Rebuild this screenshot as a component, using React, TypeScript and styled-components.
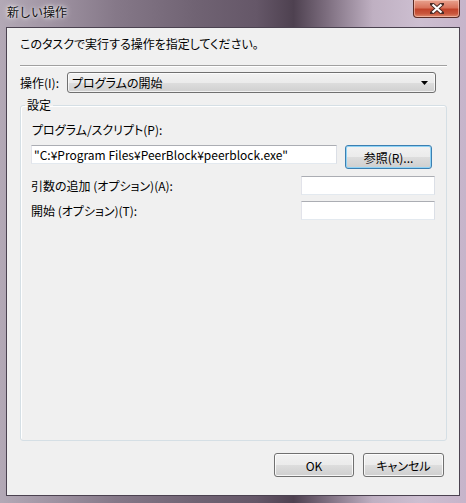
import React from "react";
import styled, { createGlobalStyle } from "styled-components";

const Global = createGlobalStyle`
  html, body { margin: 0; padding: 0; background: #c4b3c8; }
  body { font-family: "Noto Sans CJK JP", "Noto Sans", sans-serif; font-size: 12px; color: #000; }
  * { box-sizing: border-box; }
`;

const Window = styled.div`
  width: 466px;
  height: 503px;
  display: flex;
  flex-direction: column;
  padding: 0 6px 7px 6px;
  background:
    linear-gradient(90deg, #b3a9b6 0%, #9e92a1 12%, #857888 25%, #706373 42%, #655768 55%, #4e4150 63%, #7c6d7e 70%, #bfb0c2 80%, #cdbfd1 90%, #c6b4ca 100%);
  position: relative;
  overflow: hidden;
`;

const TitleBar = styled.div`
  height: 27px;
  flex: none;
  display: flex;
  align-items: flex-start;
  margin: 0 -6px;
  padding-left: 7px;
`;

const Title = styled.div`
  margin-top: 5px;
  font-size: 12px;
  line-height: 14px;
  color: #101010;
  text-shadow: 0 0 6px #fff, 0 0 3px rgba(255, 255, 255, 0.9);
`;

const CloseButton = styled.div`
  margin-left: auto;
  margin-right: 6px;
  width: 47px;
  height: 18px;
  border: 1px solid #5a2b25;
  border-top: none;
  border-radius: 0 0 4px 4px;
  background: linear-gradient(180deg, #e8a28f 0%, #d9735c 45%, #c1432b 55%, #c9563c 80%, #df8a6e 100%);
  box-shadow: inset 0 0 0 1px rgba(255, 220, 210, 0.5);
  display: flex;
  align-items: center;
  justify-content: center;
`;

const Client = styled.div`
  flex: 1;
  display: flex;
  flex-direction: column;
  background: #f0f0f0;
  border: 1px solid #4b4250;
  padding: 8px 12px 0 13px;
`;

const Instruction = styled.div`
  line-height: 16px;
  font-feature-settings: "palt";
`;

const Separator = styled.div`
  height: 2px;
  margin-top: 13px;
  border-top: 1px solid #a0a0a0;
  border-bottom: 1px solid #ffffff;
`;

const ActionRow = styled.div`
  display: flex;
  align-items: center;
  margin-top: 5px;
  margin-right: 11px;
`;

const ActionLabel = styled.div`
  width: 47px;
  flex: none;
  font-feature-settings: "palt";
`;

const Select = styled.div`
  flex: 1;
  height: 21px;
  border: 1px solid #707070;
  border-radius: 3px;
  background: linear-gradient(180deg, #f2f2f2 0%, #ebebeb 50%, #dddddd 51%, #cfcfcf 100%);
  box-shadow: inset 0 0 0 1px rgba(255, 255, 255, 0.7);
  display: flex;
  align-items: center;
  padding: 0 7px 0 4px;
  font-feature-settings: "palt";
`;

const SelectText = styled.span`
  flex: 1;
`;

const Group = styled.fieldset`
  flex: 1;
  margin: 4px 0 0 0;
  padding: 9px 11px 0 11px;
  border: 1px solid #d5dfe5;
  border-radius: 3px;
  box-shadow: inset 1px 1px 0 #fff;
  min-width: 0;
`;

const Legend = styled.legend`
  margin-left: -7px;
  padding: 0 2px;
  line-height: 16px;
  font-feature-settings: "palt";
`;

const FieldLabel = styled.div`
  line-height: 16px;
  font-feature-settings: "palt";
`;

const ProgramRow = styled.div`
  display: flex;
  align-items: flex-start;
  margin-top: 7px;
  margin-left: -1px;
`;

const TextBox = styled.div<{ $width: number }>`
  width: ${(p) => p.$width}px;
  height: 19px;
  flex: none;
  background: #fff;
  border: 1px solid #e3e9ef;
  border-top-color: #abadb3;
  border-left-color: #e2e3ea;
  border-right-color: #dbdfe6;
  padding: 0 2px;
  line-height: 17px;
  white-space: nowrap;
  overflow: hidden;
  font-feature-settings: "palt";
`;

const Button = styled.button<{ $focused?: boolean; $width: number }>`
  width: ${(p) => p.$width}px;
  height: 24px;
  flex: none;
  font-family: inherit;
  font-size: 12px;
  font-feature-settings: "palt";
  color: #000;
  padding: 0;
  border-radius: 3px;
  border: 1px solid ${(p) => (p.$focused ? "#3c7fb1" : "#707070")};
  background: ${(p) =>
    p.$focused
      ? "linear-gradient(180deg, #eaf6fd 0%, #d9f0fc 50%, #bee6fd 51%, #a7d9f5 100%)"
      : "linear-gradient(180deg, #f2f2f2 0%, #ebebeb 50%, #dddddd 51%, #cfcfcf 100%)"};
  box-shadow: inset 0 0 0 1px ${(p) => (p.$focused ? "#8fd3f6" : "rgba(255,255,255,0.8)")};
  display: flex;
  align-items: center;
  justify-content: center;
`;

const BrowseButton = styled(Button)`
  margin-left: 8px;
  margin-top: 0;
  background: linear-gradient(180deg, #f2f2f2 0%, #ebebeb 50%, #dddddd 51%, #cfcfcf 100%);
`;

const OptionRow = styled.div<{ $gap: number }>`
  display: flex;
  align-items: center;
  justify-content: space-between;
  margin-top: ${(p) => p.$gap}px;
  margin-left: -1px;
  margin-right: 0;
`;

const ButtonRow = styled.div`
  display: flex;
  justify-content: flex-end;
  gap: 9px;
  margin: 12px 3px 18px 0;
`;

export default function App() {
  return (
    <>
      <Global />
      <Window>
        <TitleBar>
          <Title>新しい操作</Title>
          <CloseButton>
            <svg width="14" height="11" viewBox="0 0 14 11">
              <path
                d="M2 1 L12 10 M12 1 L2 10"
                stroke="#4a2a25"
                strokeWidth="4"
                strokeLinecap="square"
                fill="none"
              />
              <path
                d="M2.5 1.5 L11.5 9.5 M11.5 1.5 L2.5 9.5"
                stroke="#ffffff"
                strokeWidth="2.2"
                fill="none"
              />
            </svg>
          </CloseButton>
        </TitleBar>
        <Client>
          <Instruction>このタスクで実行する操作を指定してください。</Instruction>
          <Separator />
          <ActionRow>
            <ActionLabel>操作(I):</ActionLabel>
            <Select>
              <SelectText>プログラムの開始</SelectText>
              <svg width="7" height="4" viewBox="0 0 7 4">
                <path d="M0 0 H7 L3.5 4 Z" fill="#000" />
              </svg>
            </Select>
          </ActionRow>
          <Group>
            <Legend>設定</Legend>
            <FieldLabel>プログラム/スクリプト(P):</FieldLabel>
            <ProgramRow>
              <TextBox $width={306}>"C:¥Program Files¥PeerBlock¥peerblock.exe"</TextBox>
              <BrowseButton $focused $width={87}>参照(R)...</BrowseButton>
            </ProgramRow>
            <OptionRow $gap={7}>
              <FieldLabel>引数の追加 (オプション)(A):</FieldLabel>
              <TextBox $width={134} />
            </OptionRow>
            <OptionRow $gap={6}>
              <FieldLabel>開始 (オプション)(T):</FieldLabel>
              <TextBox $width={134} />
            </OptionRow>
          </Group>
          <ButtonRow>
            <Button $width={80}>OK</Button>
            <Button $width={81}>キャンセル</Button>
          </ButtonRow>
        </Client>
      </Window>
    </>
  );
}
